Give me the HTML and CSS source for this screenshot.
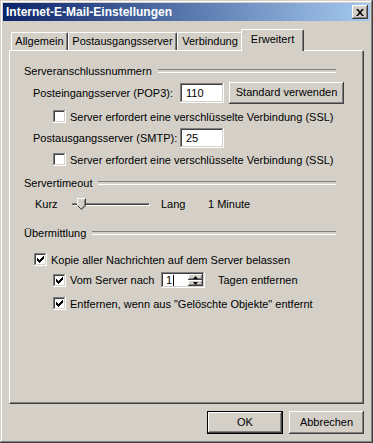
FILE: index.html
```html
<!DOCTYPE html>
<html lang="de">
<head>
    <meta charset="UTF-8">
    <title>Internet-E-Mail-Einstellungen</title>
    <link rel="stylesheet" href="styles.css">
</head>
<body>
    <div class="window">
        <div class="titlebar">
            <span class="title">Internet-E-Mail-Einstellungen</span>
            <span class="close">
                <svg width="8" height="7" viewBox="0 0 8 7"><path d="M0 0h2l2 2.2L6 0h2L5 3.5 8 7H6L4 4.8 2 7H0l3-3.5z" fill="#000"/></svg>
            </span>
        </div>
        <div class="client">
            <div class="tabs">
                <div class="tab t1">Allgemein</div>
                <div class="tab t2">Postausgangsserver</div>
                <div class="tab t3">Verbindung</div>
                <div class="tab t4 active">Erweitert</div>
            </div>
            <div class="panel">
                <!-- Serveranschlussnummern -->
                <div class="group g1">Serveranschlussnummern</div>
                <div class="row r-pop">
                    <span class="label">Posteingangsserver (POP3):</span>
                    <span class="field port">110</span>
                    <span class="btn std">Standard verwenden</span>
                </div>
                <div class="row r-chk sub r-ssl1">
                    <span class="check"></span>
                    <span>Server erfordert eine verschlüsselte Verbindung (SSL)</span>
                </div>
                <div class="row r-smtp">
                    <span class="label">Postausgangsserver (SMTP):</span>
                    <span class="field port">25</span>
                </div>
                <div class="row r-chk sub r-ssl2">
                    <span class="check"></span>
                    <span>Server erfordert eine verschlüsselte Verbindung (SSL)</span>
                </div>

                <!-- Servertimeout -->
                <div class="group g2">Servertimeout</div>
                <div class="row r-slider">
                    <span class="kurz">Kurz</span>
                    <span class="track">
                        <span class="thumb">
                            <svg width="9" height="12" viewBox="0 0 9 12">
                                <path d="M0.5 0.5h8v7l-4 4-4-4z" fill="#d4d0c8"/>
                                <path d="M0.5 8V0.5h8" fill="none" stroke="#fff"/>
                                <path d="M8.5 0.5v7.2L4.5 11.5 0.5 7.5" fill="none" stroke="#404040"/>
                                <path d="M7.5 1.5v6L4.5 10.5" fill="none" stroke="#808080"/>
                            </svg>
                        </span>
                    </span>
                    <span class="lang">Lang</span>
                    <span>1 Minute</span>
                </div>

                <!-- Übermittlung -->
                <div class="group g3">Übermittlung</div>
                <div class="row r-chk r-kopie">
                    <span class="check on"></span>
                    <span>Kopie aller Nachrichten auf dem Server belassen</span>
                </div>
                <div class="row sub r-vom">
                    <span class="check on"></span>
                    <span class="vom">Vom Server nach</span>
                    <span class="field spin">
                        <span class="spin-val">1<span class="caret"></span></span>
                        <span class="spin-btns">
                            <span class="spin-btn"><svg width="5" height="3" viewBox="0 0 5 3"><path d="M2.5 0L5 3H0z" fill="#000"/></svg></span>
                            <span class="spin-btn"><svg width="5" height="3" viewBox="0 0 5 3"><path d="M0 0h5L2.5 3z" fill="#000"/></svg></span>
                        </span>
                    </span>
                    <span class="tagen">Tagen entfernen</span>
                </div>
                <div class="row r-chk sub r-entf">
                    <span class="check on"></span>
                    <span>Entfernen, wenn aus "Gelöschte Objekte" entfernt</span>
                </div>
            </div>
            <div class="footer">
                <span class="btn dlg default">OK</span>
                <span class="btn dlg">Abbrechen</span>
            </div>
        </div>
    </div>
</body>
</html>
```

FILE: styles.css
```css
* {
    box-sizing: border-box;
    margin: 0;
    padding: 0;
}
body {
    background: #d4d0c8;
    font-family: "Liberation Sans", Arial, sans-serif;
    font-size: 11px;
    color: #000;
}
.window {
    width: 373px;
    height: 443px;
    padding: 3px;
    background: #d4d0c8;
    box-shadow: inset -1px -1px #404040, inset 1px 1px #d4d0c8, inset -2px -2px #808080, inset 2px 2px #fff;
}
.titlebar {
    height: 18px;
    background: linear-gradient(to right, #0a246a, #a6caf0);
    display: flex;
    align-items: center;
    justify-content: space-between;
    padding: 0 2px 0 3px;
}
.title {
    color: #fff;
    font-weight: bold;
    font-size: 12px;
}
.close {
    width: 16px;
    height: 14px;
    background: #d4d0c8;
    display: flex;
    align-items: center;
    justify-content: center;
    box-shadow: inset -1px -1px #404040, inset 1px 1px #fff, inset -2px -2px #808080;
}
.client {
    padding: 8px 6px 0 6px;
}

/* tabs */
.tabs {
    display: flex;
    align-items: flex-end;
    height: 21px;
    padding-left: 2px;
}
.tab {
    height: 18px;
    line-height: 17px;
    text-align: center;
    background: #d4d0c8;
    border-top: 1px solid #fff;
    border-left: 1px solid #fff;
    border-right: 1px solid #404040;
    border-radius: 2px 2px 0 0;
    box-shadow: inset -1px 0 #808080;
}
.t1 { width: 57px; }
.t2 { width: 109px; }
.t3 { width: 66px; }
.t4 { width: 59px; }
.tab.active {
    position: relative;
    z-index: 1;
    height: 22px;
    line-height: 19px;
    width: 63px;
    margin: 0 -2px -1px -2px;
}

/* panel */
.panel {
    height: 354px;
    background: #d4d0c8;
    border-top: 1px solid #fff;
    border-left: 1px solid #fff;
    border-right: 1px solid #404040;
    border-bottom: 1px solid #404040;
    box-shadow: inset -1px -1px #808080;
    padding-top: 0;
}
.group {
    display: flex;
    align-items: center;
    height: 14px;
    padding: 0 27px 0 14px;
}
.group::after {
    content: "";
    flex: 1;
    height: 2px;
    border-top: 1px solid #808080;
    border-bottom: 1px solid #fff;
    margin-left: 6px;
}
.g1 { margin-top: 13px; }
.g2 { margin-top: 10px; }
.g3 { margin-top: 14px; }

.row {
    display: flex;
    align-items: center;
    padding-left: 23px;
}
.row.sub { padding-left: 43px; }
.r-pop { margin-top: 4px; height: 22px; }
.r-ssl1 { margin-top: 6px; height: 13px; }
.r-smtp { margin-top: 5px; height: 20px; }
.r-ssl2 { margin-top: 5px; height: 13px; }
.r-slider { margin-top: 6px; height: 16px; padding-left: 25px; }
.r-kopie { margin-top: 13px; height: 13px; padding-left: 24px; }
.r-vom { margin-top: 6px; height: 16px; }
.r-entf { margin-top: 9px; height: 13px; }

.label { width: 147px; }

.field {
    background: #fff;
    box-shadow: inset -1px -1px #fff, inset 1px 1px #808080, inset -2px -2px #d4d0c8, inset 2px 2px #404040;
}
.port {
    width: 44px;
    height: 20px;
    line-height: 20px;
    padding-left: 6px;
}

.btn {
    background: #d4d0c8;
    text-align: center;
    box-shadow: inset -1px -1px #404040, inset 1px 1px #fff, inset -2px -2px #808080, inset 2px 2px #d4d0c8;
}
.std {
    width: 115px;
    height: 22px;
    line-height: 21px;
    margin-left: 5px;
}

.check {
    width: 13px;
    height: 13px;
    margin-right: 4px;
    flex-shrink: 0;
    background: #fff;
    box-shadow: inset -1px -1px #fff, inset 1px 1px #808080, inset -2px -2px #d4d0c8, inset 2px 2px #404040;
}
.check.on {
    background: #fff url("data:image/svg+xml,%3Csvg xmlns='http://www.w3.org/2000/svg' width='13' height='13'%3E%3Cpath d='M3 5h1v1h1v1h1V6h1V5h1V4h1V3h1v3H9v1H8v1H7v1H6v1H5V9H4V8H3z' fill='%23000'/%3E%3C/svg%3E") no-repeat;
}

/* slider */
.kurz { width: 37px; }
.track {
    position: relative;
    width: 78px;
    height: 3px;
    border-top: 1px solid #808080;
    border-left: 1px solid #808080;
    border-bottom: 1px solid #fff;
    border-right: 1px solid #fff;
    background: #404040;
}
.thumb {
    position: absolute;
    left: 4px;
    top: -6px;
    display: block;
    line-height: 0;
}
.lang { margin-left: 11px; width: 47px; }

/* spin */
.vom { width: 91px; }
.spin {
    width: 44px;
    height: 16px;
    display: flex;
    padding: 2px;
}
.spin-val {
    flex: 1;
    line-height: 12px;
    padding-left: 3px;
    display: flex;
    align-items: center;
}
.caret {
    display: inline-block;
    width: 1px;
    height: 11px;
    background: #000;
    margin-left: 1px;
}
.spin-btns {
    width: 15px;
    display: flex;
    flex-direction: column;
}
.spin-btn {
    flex: 1;
    display: flex;
    align-items: center;
    justify-content: center;
    background: #d4d0c8;
    box-shadow: inset -1px -1px #404040, inset 1px 1px #fff, inset -2px -2px #808080;
}
.tagen { margin-left: 13px; }

/* footer */
.footer {
    display: flex;
    justify-content: flex-end;
    gap: 6px;
    margin-top: 7px;
}
.dlg {
    width: 75px;
    height: 23px;
    line-height: 22px;
}
.dlg.default {
    width: 76px;
    border: 1px solid #000;
    line-height: 20px;
}
```
